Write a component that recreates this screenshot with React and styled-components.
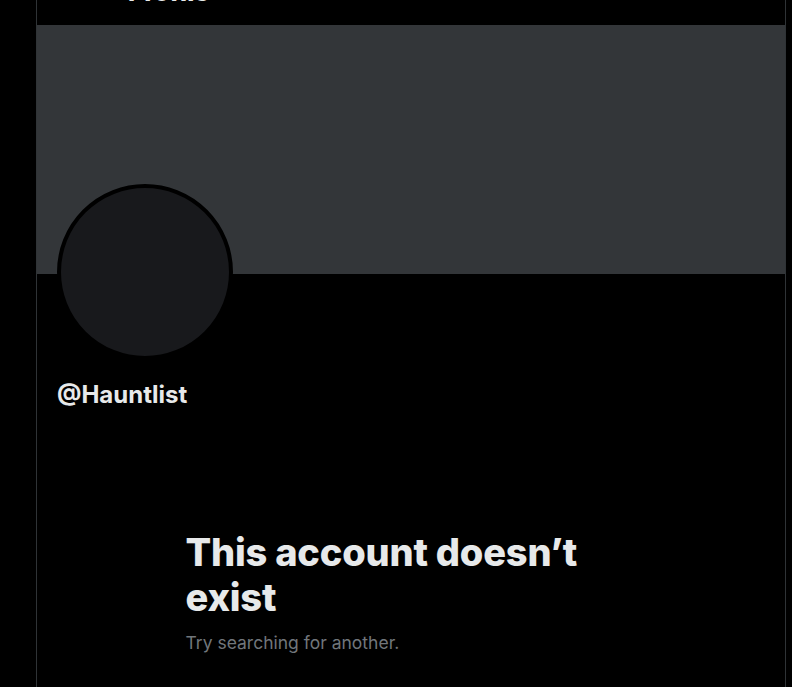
import React from 'react'
import styled, { createGlobalStyle } from 'styled-components'

const GlobalStyle = createGlobalStyle`
    html, body {
        margin: 0;
        padding: 0;
        background-color: #000000;
        height: 100%;
        overflow: hidden;
    }
    body {
        font-family: Inter, "Noto Sans", sans-serif;
        color: #e7e9ea;
    }
`

const Page = styled.div`
    display: flex;
    padding-left: 36px;
    min-height: 687px;
`

const Column = styled.main`
    width: 748px;
    border-left: 1px solid #2f3336;
    border-right: 1px solid #2f3336;
    display: flex;
    flex-direction: column;
    min-height: 687px;
`

const Header = styled.div`
    height: 25px;
    overflow: hidden;
    padding-left: 91px;
`

const HeaderTitle = styled.h2`
    margin: -23px 0 0 0;
    font-size: 25px;
    line-height: 30px;
    font-weight: 800;
    color: #e7e9ea;
`

const Banner = styled.div`
    height: 249px;
    background-color: #333639;
`

const ProfileInfo = styled.div`
    padding: 0 20px;
`

const Avatar = styled.div`
    width: 168px;
    height: 168px;
    margin-top: -90px;
    border: 4px solid #000000;
    border-radius: 50%;
    background-color: #18191c;
`

const Handle = styled.div`
    margin-top: 20px;
    font-size: 24px;
    line-height: 30px;
    font-weight: 700;
    color: #e7e9ea;
`

const EmptyState = styled.div`
    width: 451px;
    margin: 120px auto 0 auto;
`

const EmptyTitle = styled.h1`
    margin: 0;
    font-size: 38px;
    line-height: 45px;
    font-weight: 800;
    letter-spacing: -0.2px;
    color: #e7e9ea;
`

const EmptyText = styled.p`
    margin: 10px 0 0 0;
    font-size: 17.5px;
    line-height: 25px;
    color: #71767b;
`

export default function App() {
    return (
        <>
            <GlobalStyle />
            <Page>
                <Column>
                    <Header>
                        <HeaderTitle>Profile</HeaderTitle>
                    </Header>
                    <Banner />
                    <ProfileInfo>
                        <Avatar />
                        <Handle>@Hauntlist</Handle>
                    </ProfileInfo>
                    <EmptyState>
                        <EmptyTitle>This account doesn’t exist</EmptyTitle>
                        <EmptyText>Try searching for another.</EmptyText>
                    </EmptyState>
                </Column>
            </Page>
        </>
    )
}
